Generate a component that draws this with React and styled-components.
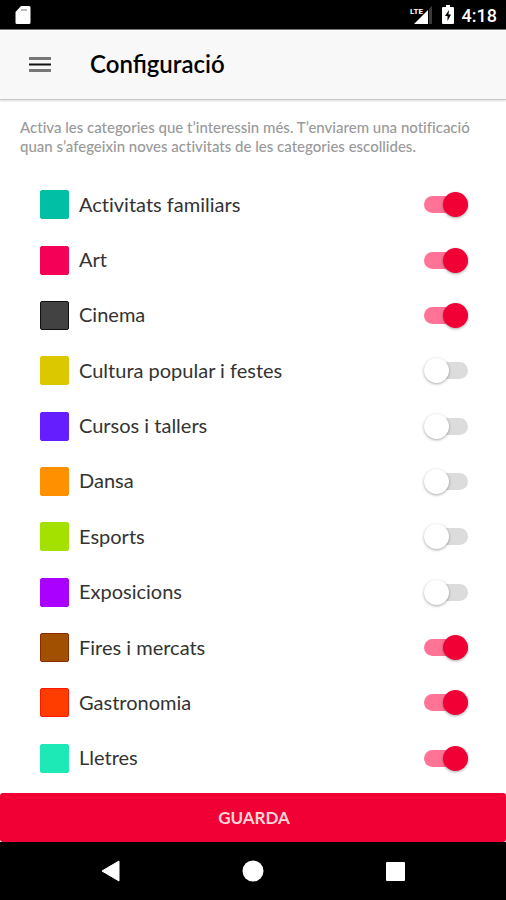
import React, { useState } from 'react';
import styled, { createGlobalStyle } from 'styled-components';

const GlobalStyle = createGlobalStyle`
  * {
    box-sizing: border-box;
  }

  body {
    margin: 0;
    background-color: #fff;
    font-family: Lato, 'Liberation Sans', sans-serif;
    color: #333;
  }
`;

const Screen = styled.div`
  display: flex;
  flex-direction: column;
  min-height: 100vh;
`;

const StatusBar = styled.div`
  display: flex;
  align-items: center;
  justify-content: space-between;
  height: 30px;
  padding: 0 9px 0 14px;
  border-bottom: 1px solid #777;
  background-color: #000;
  color: #fff;
`;

const StatusIcons = styled.div`
  display: flex;
  align-items: center;
  gap: 8px;
`;

const Clock = styled.time`
  font-family: Roboto, sans-serif;
  font-size: 18px;
  font-weight: 500;
  line-height: 24px;
  padding-top: 2px;
`;

const Header = styled.header`
  display: flex;
  align-items: center;
  gap: 38px;
  height: 70px;
  padding: 0 28px;
  border-bottom: 1px solid #c8c8c8;
  background-color: #f8f8f8;
  box-shadow: 0 1px 2px rgba(0, 0, 0, 0.15);
`;

const MenuButton = styled.button`
  display: flex;
  padding: 0;
  border: none;
  background: none;
  cursor: pointer;
`;

const Title = styled.h1`
  margin: 0;
  padding-bottom: 2px;
  font-size: 24px;
  font-weight: 600;
  line-height: 32px;
  color: #000;
`;

const Form = styled.form`
  display: flex;
  flex: 1;
  flex-direction: column;
`;

const Intro = styled.p`
  margin: 0;
  padding: 18px 20px 21px;
  font-size: 15px;
  font-weight: 500;
  font-variant-ligatures: none;
  line-height: 19px;
  color: #999;
`;

const List = styled.ul`
  display: flex;
  flex: 1;
  flex-direction: column;
  margin: 0;
  padding: 0 37px 7px 40px;
  list-style: none;
`;

const Row = styled.li`
  display: flex;
  flex: 1;
  align-items: center;
  min-height: 48px;
`;

const Swatch = styled.span`
  width: 29px;
  height: 29px;
  margin-right: 10px;
  border: 1px solid ${(props) => props.$edge || props.$color};
  border-radius: 2px;
  background-color: ${(props) => props.$color};
`;

const Label = styled.label`
  flex: 1;
  padding-bottom: 2px;
  font-size: 20px;
  font-variant-ligatures: none;
  line-height: 24px;
  cursor: pointer;
`;

const Toggle = styled.input`
  appearance: none;
  position: relative;
  display: flex;
  align-items: center;
  width: 46px;
  height: 25px;
  margin: 0;
  padding: 0 1px;
  border-radius: 13px;
  cursor: pointer;

  &::before {
    content: '';
    width: 44px;
    height: 17px;
    border-radius: 9px;
    background-color: #dcdcdc;
  }

  &::after {
    content: '';
    position: absolute;
    top: 0;
    left: 1px;
    width: 25px;
    height: 25px;
    border-radius: 50%;
    background-color: #fff;
    box-shadow: 0 1px 3px rgba(0, 0, 0, 0.35);
  }

  &:checked::before {
    background-color: #ff7396;
  }

  &:checked::after {
    left: 20px;
    background-color: #f00034;
  }
`;

const SaveButton = styled.button`
  height: 49px;
  padding: 0 0 0 2px;
  border: none;
  border-radius: 3px;
  background-color: #f00034;
  font-family: inherit;
  font-size: 17px;
  font-weight: 700;
  line-height: 24px;
  color: #ffd5d8;
  cursor: pointer;
`;

const NavBar = styled.nav`
  display: flex;
  align-items: center;
  justify-content: center;
  gap: 118px;
  height: 58px;
  background-color: #000;
`;

const NavButton = styled.button`
  display: flex;
  padding: 0;
  border: none;
  background: none;
  cursor: pointer;
`;

const initialCategories = [
  { id: 'familiars', name: 'Activitats familiars', color: '#00bfa5', enabled: true },
  { id: 'art', name: 'Art', color: '#f50057', enabled: true },
  { id: 'cinema', name: 'Cinema', color: '#424242', edge: '#111', enabled: true },
  { id: 'cultura', name: 'Cultura popular i festes', color: '#dcc800', enabled: false },
  { id: 'cursos', name: 'Cursos i tallers', color: '#651fff', enabled: false },
  { id: 'dansa', name: 'Dansa', color: '#ff9100', enabled: false },
  { id: 'esports', name: 'Esports', color: '#a4e000', enabled: false },
  { id: 'exposicions', name: 'Exposicions', color: '#aa00ff', enabled: false },
  { id: 'fires', name: 'Fires i mercats', color: '#a05000', edge: '#8c2c00', enabled: true },
  { id: 'gastronomia', name: 'Gastronomia', color: '#ff3d00', edge: '#ff1800', enabled: true },
  { id: 'lletres', name: 'Lletres', color: '#1de9b6', enabled: true },
];

function SdCardIcon() {
  return (
    <svg width="18" height="20" viewBox="0 0 18 20" aria-hidden="true">
      <path d="M7 1h8q1.500 0 1.500 1.500v15q0 1.500-1.500 1.500H3q-1.500 0-1.500-1.500V7z" fill="#fff" />
      <path d="M8 4v2M10 4v2M12 4v2" stroke="#777" strokeWidth="1" />
    </svg>
  );
}

function SignalIcon() {
  return (
    <svg width="24" height="20" viewBox="0 0 24 20" aria-hidden="true">
      <path d="M19 4l3-3v18h-3z" fill="#3a3a3a" />
      <path d="M4 19L18 5v14z" fill="#fff" />
      <path d="M0 0h14v9H0z" fill="#000" />
      <text x="0" y="9" fill="#fff" fontFamily="Roboto, sans-serif" fontSize="8" fontWeight="700">
        LTE
      </text>
    </svg>
  );
}

function BatteryIcon() {
  return (
    <svg width="12" height="19" viewBox="0 0 12 19" aria-hidden="true">
      <path d="M4 0h4v2h3q1 0 1 1v15q0 1-1 1H1q-1 0-1-1V3q0-1 1-1h3z" fill="#fff" />
      <path d="M7 5L3 11h2.500v5L9 9.500H6.500z" fill="#000" />
    </svg>
  );
}

function App() {
  const [categories, setCategories] = useState(initialCategories);

  const toggleCategory = (id) => {
    setCategories(
      categories.map((item) => (item.id === id ? { ...item, enabled: !item.enabled } : item))
    );
  };

  const handleSubmit = (e) => {
    e.preventDefault();
  };

  return (
    <Screen>
      <GlobalStyle />
      <StatusBar>
        <SdCardIcon />
        <StatusIcons>
          <SignalIcon />
          <BatteryIcon />
          <Clock>4:18</Clock>
        </StatusIcons>
      </StatusBar>
      <Header>
        <MenuButton type="button" aria-label="Menú">
          <svg width="24" height="18" viewBox="0 0 24 18">
            <path d="M1 2.500h22M1 14.500h22" stroke="#777" strokeWidth="3" />
            <path d="M1 8.500h22" stroke="#111" strokeWidth="2" />
          </svg>
        </MenuButton>
        <Title>Configuració</Title>
      </Header>
      <Form onSubmit={handleSubmit}>
        <Intro>
          Activa les categories que t’interessin més. T’enviarem una notificació quan
          s’afegeixin noves activitats de les categories escollides.
        </Intro>
        <List>
          {categories.map((item) => (
            <Row key={item.id}>
              <Swatch $color={item.color} $edge={item.edge} />
              <Label htmlFor={item.id}>{item.name}</Label>
              <Toggle
                id={item.id}
                type="checkbox"
                role="switch"
                checked={item.enabled}
                onChange={() => toggleCategory(item.id)}
              />
            </Row>
          ))}
        </List>
        <SaveButton type="submit">GUARDA</SaveButton>
      </Form>
      <NavBar>
        <NavButton type="button" aria-label="Enrere">
          <svg width="24" height="24" viewBox="0 0 24 24">
            <path d="M3 12L20 2v20z" fill="#fff" stroke="#fff" strokeLinejoin="round" />
          </svg>
        </NavButton>
        <NavButton type="button" aria-label="Inici">
          <svg width="24" height="24" viewBox="0 0 24 24">
            <circle cx="12" cy="12" r="10.500" fill="#fff" />
          </svg>
        </NavButton>
        <NavButton type="button" aria-label="Recents">
          <svg width="24" height="24" viewBox="0 0 24 24">
            <rect x="3" y="3" width="19" height="19" rx="1" fill="#fff" />
          </svg>
        </NavButton>
      </NavBar>
    </Screen>
  );
}

export default App;
